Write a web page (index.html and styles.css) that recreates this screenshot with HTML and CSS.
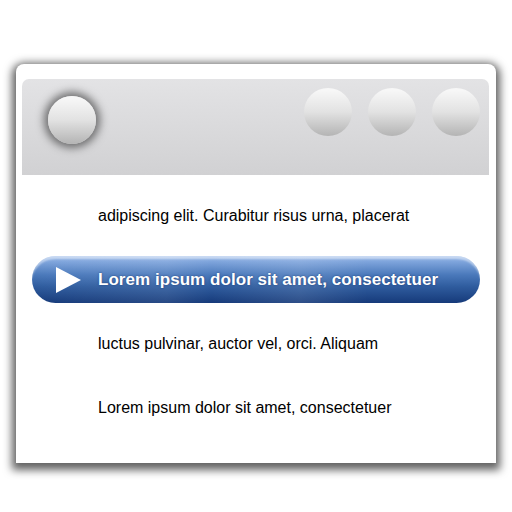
FILE: index.html
```html
<!DOCTYPE html>
<html lang="en">
  <head>
    <meta charset="UTF-8" />
    <title>Window</title>
    <link rel="stylesheet" href="styles.css">
  </head>
  <body>
    <div class="window">
      <div class="toolbar">
        <span class="knob knob-sunk"></span>
        <div class="knobs">
          <span class="knob"></span>
          <span class="knob"></span>
          <span class="knob"></span>
        </div>
      </div>
      <ul class="list">
        <li class="row">adipiscing elit. Curabitur risus urna, placerat</li>
        <li class="row active">
          <svg class="play" width="26" height="26" viewBox="0 0 26 26">
            <polygon points="0,0 25,13 0,26" fill="#fff" />
          </svg>
          <span>Lorem ipsum dolor sit amet, consectetuer</span>
        </li>
        <li class="row">luctus pulvinar, auctor vel, orci. Aliquam</li>
        <li class="row">Lorem ipsum dolor sit amet, consectetuer</li>
      </ul>
    </div>
  </body>
</html>
```
FILE: styles.css
```css
html {
  background: #fff;
}
body {
  margin: 0;
  min-height: 512px;
  box-sizing: border-box;
  font-family: "Liberation Sans", Arial, sans-serif;
  padding: 64px 16px 40px 16px;
}
.window {
  width: 480px;
  height: 399px;
  background: #fff;
  border-radius: 8px 8px 0 0;
  box-shadow: 0 3px 9px 4px rgba(0, 0, 0, 0.62);
  padding: 15px 7px 0 6px;
  box-sizing: border-box;
}
.toolbar {
  height: 96px;
  border-radius: 7px 7px 0 0;
  background: linear-gradient(#e3e3e5, #d1d1d3);
  display: flex;
  justify-content: space-between;
  padding: 9px 9px 0 26px;
  box-sizing: border-box;
}
.knobs {
  display: flex;
  gap: 16px;
}
.knob {
  display: block;
  width: 48px;
  height: 48px;
  border-radius: 50%;
  background: linear-gradient(#f7f7f7 5%, #e2e2e2 50%, #b4b4b4);
}
.knob-sunk {
  margin-top: 8px;
  box-shadow: 0 0 9px 4px rgba(0, 0, 0, 0.5);
}
.list {
  list-style: none;
  margin: 0;
  padding: 9px 0 0 0;
}
.row {
  height: 64px;
  display: flex;
  align-items: center;
  padding-left: 76px;
  font-size: 16px;
  color: #000;
}
.row.active {
  height: 47px;
  margin: 8px 9px 9px 10px;
  padding-left: 24px;
  border-radius: 24px;
  color: #fff;
  font-size: 17px;
  font-weight: bold;
  letter-spacing: 0.05px;
  background:
    linear-gradient(90deg, rgba(255, 255, 255, 0) 0, rgba(255, 255, 255, 0.08) 30%, rgba(255, 255, 255, 0) 40%, rgba(255, 255, 255, 0.1) 60%, rgba(255, 255, 255, 0) 75%),
    linear-gradient(#9dbcea 0, #7ea4dc 12%, #4a79bb 40%, #2f5c9e 65%, #163a7a 100%);
  box-shadow: inset 0 4px 2px -1px rgba(255, 255, 255, 0.45);
  text-shadow: 0 0 2px rgba(20, 50, 110, 0.8);
}
.play {
  margin-right: 16px;
  flex: none;
}
```
